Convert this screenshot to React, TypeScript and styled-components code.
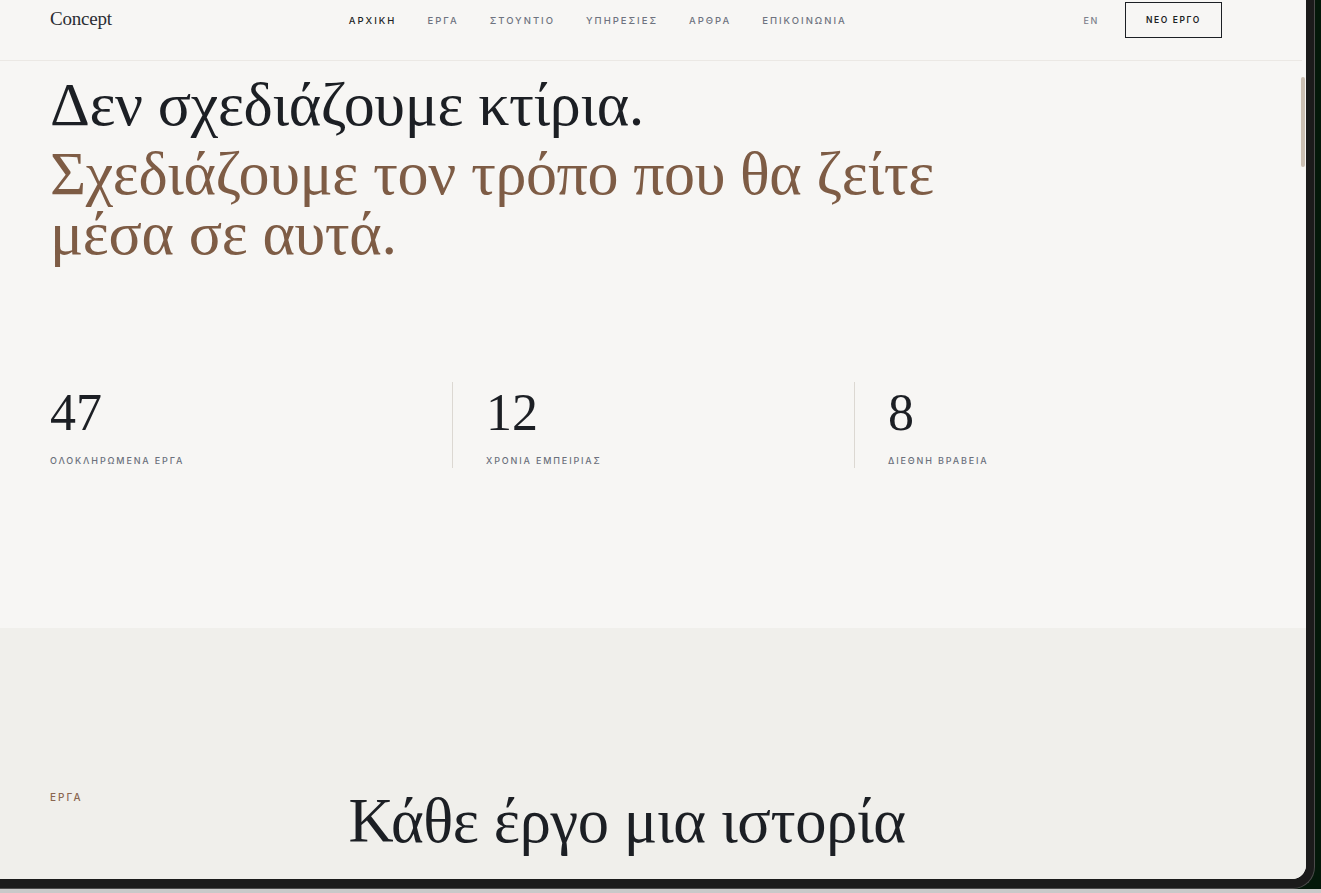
import React from 'react';
import styled, { createGlobalStyle } from 'styled-components';

const GlobalStyle = createGlobalStyle`
  html, body {
    margin: 0;
    padding: 0;
    background: #04180a;
    overflow: hidden;
  }
  * {
    box-sizing: border-box;
  }
`

const navItems = ['ΑΡΧΙΚΗ', 'ΕΡΓΑ', 'ΣΤΟΥΝΤΙΟ', 'ΥΠΗΡΕΣΙΕΣ', 'ΑΡΘΡΑ', 'ΕΠΙΚΟΙΝΩΝΙΑ']

const stats = [
  { value: '47', label: 'ΟΛΟΚΛΗΡΩΜΕΝΑ ΕΡΓΑ' },
  { value: '12', label: 'ΧΡΟΝΙΑ ΕΜΠΕΙΡΙΑΣ' },
  { value: '8', label: 'ΔΙΕΘΝΗ ΒΡΑΒΕΙΑ' },
]

const serif = `"Liberation Serif", "DejaVu Serif", serif`
const sans = `Inter, "Noto Sans", "Liberation Sans", sans-serif`

const Screen = styled.div`
  width: 1321px;
  height: 893px;
  position: relative;
  background: linear-gradient(to bottom, transparent 889px, #c9c9c9 889px);
`

const Device = styled.div`
  width: 1315px;
  height: 889px;
  background: #1b1b1b;
  border-right: 1px solid #4b4b4b;
  border-bottom: 1px solid #4b4b4b;
  border-bottom-right-radius: 22px;
  overflow: hidden;
`

const Page = styled.div`
  position: relative;
  width: 1306px;
  height: 879px;
  background: #f7f6f4;
  border-bottom-right-radius: 14px;
  overflow: hidden;
`

const ScrollThumb = styled.div`
  position: absolute;
  top: 77px;
  right: 1px;
  width: 4px;
  height: 90px;
  border-radius: 2px;
  background: #cbc0b3;
`

const Header = styled.header`
  height: 61px;
  padding: 0 80px 0 50px;
  border-bottom: 1px solid #ebe8e4;
  margin-right: 4px;
`

const HeaderRow = styled.div`
  height: 40px;
  display: flex;
  align-items: center;
  justify-content: space-between;
`

const Logo = styled.div`
  font-family: ${serif};
  font-size: 19px;
  color: #2a2d32;
  letter-spacing: -0.2px;
  padding-bottom: 2px;
`

const Nav = styled.nav`
  display: flex;
  gap: 31px;
`

const NavLink = styled.a<{ $active?: boolean }>`
  font-family: ${sans};
  font-size: 9.5px;
  font-weight: 500;
  letter-spacing: 2px;
  color: ${p => (p.$active ? '#1c1f24' : '#6e7380')};
  text-decoration: none;
`

const HeaderRight = styled.div`
  display: flex;
  align-items: center;
  gap: 26px;
`

const Lang = styled.span`
  font-family: ${sans};
  font-size: 9px;
  font-weight: 500;
  letter-spacing: 1.6px;
  color: #7b808b;
`

const CtaButton = styled.button`
  width: 97px;
  height: 36px;
  border: 1px solid #1c1f24;
  background: transparent;
  font-family: ${sans};
  font-size: 8.5px;
  font-weight: 600;
  letter-spacing: 1.6px;
  color: #1c1f24;
  padding: 0;
`

const Hero = styled.section`
  padding: 12px 50px 0;
  height: 567px;
`

const Title = styled.h1`
  margin: 0;
  font-family: ${serif};
  font-weight: 400;
  font-size: 62px;
  line-height: 62px;
  letter-spacing: -0.4px;
  color: #1c1f24;
  max-width: 940px;
`

const TitleLead = styled.span`
  display: block;
  margin-bottom: 8px;
`

const TitleAccent = styled.span`
  display: block;
  line-height: 60px;
  color: #7e5c45;
`

const StatsGrid = styled.div`
  display: grid;
  grid-template-columns: repeat(3, 1fr);
  margin-top: 119px;
`

const Stat = styled.div<{ $first?: boolean }>`
  height: 86px;
  padding: 5px 0 0 ${p => (p.$first ? '0' : '33px')};
  border-left: ${p => (p.$first ? 'none' : '1px solid #dcd8d2')};
`

const StatValue = styled.div`
  font-family: ${serif};
  font-size: 52px;
  line-height: 52px;
  color: #1c1f24;
`

const StatLabel = styled.div`
  margin-top: 16px;
  font-family: ${sans};
  font-size: 9px;
  font-weight: 500;
  letter-spacing: 1.85px;
  color: #6b707c;
`

const Projects = styled.section`
  background: #f0efeb;
  height: 260px;
  padding: 160px 50px 0;
  display: grid;
  grid-template-columns: 1fr 3fr;
`

const SectionLabel = styled.div`
  padding-top: 3px;
  font-family: ${sans};
  font-size: 10px;
  font-weight: 500;
  letter-spacing: 2px;
  color: #8a6650;
`

const SectionTitle = styled.h2`
  margin: 0 0 0 -3px;
  font-family: ${serif};
  font-weight: 400;
  font-size: 62.5px;
  line-height: 66px;
  letter-spacing: -0.4px;
  color: #1c1f24;
`

const App = () => {
  return (
    <Screen>
      <GlobalStyle />
      <Device>
        <Page>
          <Header>
            <HeaderRow>
              <Logo>Concept</Logo>
              <Nav>
                {navItems.map((item, i) => (
                  <NavLink key={item} href="#" $active={i === 0}>{item}</NavLink>
                ))}
              </Nav>
              <HeaderRight>
                <Lang>EN</Lang>
                <CtaButton>ΝΕΟ ΕΡΓΟ</CtaButton>
              </HeaderRight>
            </HeaderRow>
          </Header>

          <Hero>
            <Title>
              <TitleLead>Δεν σχεδιάζουμε κτίρια.</TitleLead>
              <TitleAccent>Σχεδιάζουμε τον τρόπο που θα ζείτε μέσα σε αυτά.</TitleAccent>
            </Title>
            <StatsGrid>
              {stats.map((s, i) => (
                <Stat key={s.label} $first={i === 0}>
                  <StatValue>{s.value}</StatValue>
                  <StatLabel>{s.label}</StatLabel>
                </Stat>
              ))}
            </StatsGrid>
          </Hero>

          <Projects>
            <SectionLabel>ΕΡΓΑ</SectionLabel>
            <SectionTitle>Κάθε έργο μια ιστορία</SectionTitle>
          </Projects>

          <ScrollThumb />
        </Page>
      </Device>
    </Screen>
  )
}

export default App
